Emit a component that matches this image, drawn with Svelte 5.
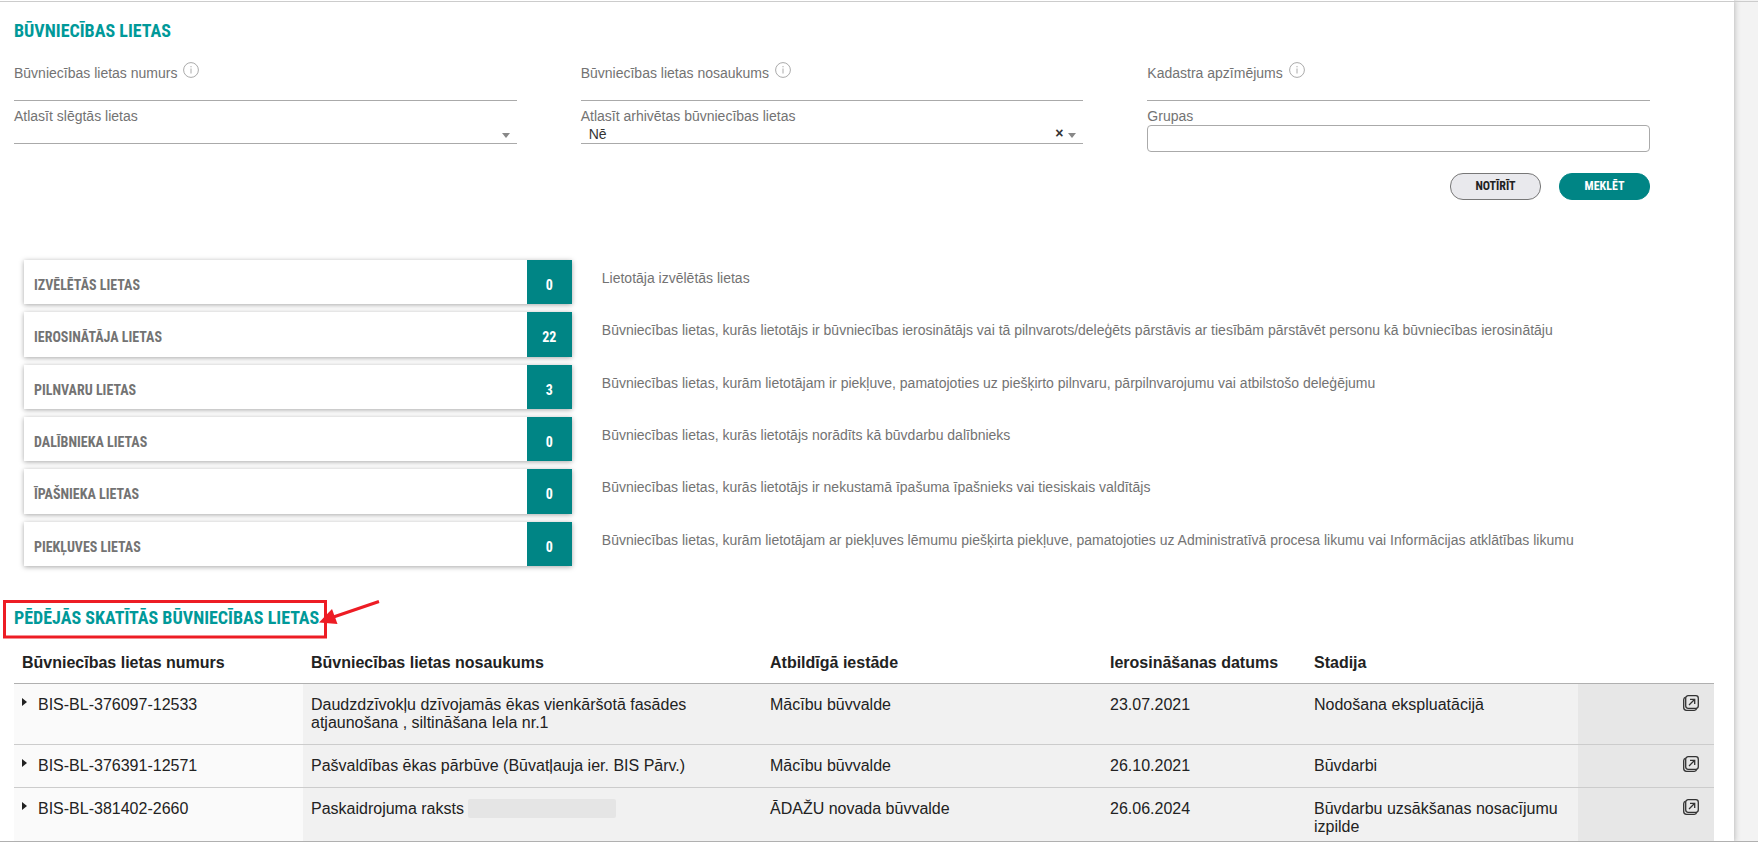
<script lang="ts">
	let number = $state('');
	let name = $state('');
	let cadastre = $state('');
	let closed = $state('');
	let archived = $state('no');
	let groups = $state('');

	const categories = [
		{ label: 'Izvēlētās lietas', count: 0, text: 'Lietotāja izvēlētās lietas' },
		{
			label: 'Ierosinātāja lietas',
			count: 22,
			text: 'Būvniecības lietas, kurās lietotājs ir būvniecības ierosinātājs vai tā pilnvarots/deleģēts pārstāvis ar tiesībām pārstāvēt personu kā būvniecības ierosinātāju'
		},
		{
			label: 'Pilnvaru lietas',
			count: 3,
			text: 'Būvniecības lietas, kurām lietotājam ir piekļuve, pamatojoties uz piešķirto pilnvaru, pārpilnvarojumu vai atbilstošo deleģējumu'
		},
		{
			label: 'Dalībnieka lietas',
			count: 0,
			text: 'Būvniecības lietas, kurās lietotājs norādīts kā būvdarbu dalībnieks'
		},
		{
			label: 'Īpašnieka lietas',
			count: 0,
			text: 'Būvniecības lietas, kurās lietotājs ir nekustamā īpašuma īpašnieks vai tiesiskais valdītājs'
		},
		{
			label: 'Piekļuves lietas',
			count: 0,
			text: 'Būvniecības lietas, kurām lietotājam ar piekļuves lēmumu piešķirta piekļuve, pamatojoties uz Administratīvā procesa likumu vai Informācijas atklātības likumu'
		}
	];

	const cases = [
		{
			number: 'BIS-BL-376097-12533',
			name: 'Daudzdzīvokļu dzīvojamās ēkas vienkāršotā fasādes atjaunošana , siltināšana Iela nr.1',
			authority: 'Mācību būvvalde',
			date: '23.07.2021',
			stage: 'Nodošana ekspluatācijā'
		},
		{
			number: 'BIS-BL-376391-12571',
			name: 'Pašvaldības ēkas pārbūve (Būvatļauja ier. BIS Pārv.)',
			authority: 'Mācību būvvalde',
			date: '26.10.2021',
			stage: 'Būvdarbi'
		},
		{
			number: 'BIS-BL-381402-2660',
			name: 'Paskaidrojuma raksts',
			redacted: true,
			authority: 'ĀDAŽU novada būvvalde',
			date: '26.06.2024',
			stage: 'Būvdarbu uzsākšanas nosacījumu izpilde'
		}
	];

	function clearForm() {
		number = name = cadastre = closed = archived = groups = '';
	}
</script>

{#snippet info()}
	<svg class="info" viewBox="0 0 16 16" aria-hidden="true">
		<circle cx="8" cy="8" r="7.4" />
		<path d="M8 6.5v5M8 4v1.3" />
	</svg>
{/snippet}

{#snippet caret()}
	<svg class="caret" viewBox="0 0 8 5" aria-hidden="true"><path d="M0 0h8L4 5z" /></svg>
{/snippet}

<div class="frame">
	<main class="page">
		<h1>Būvniecības lietas</h1>

		<form class="search" onsubmit={(e) => e.preventDefault()}>
			<div class="field tall">
				<label for="number">Būvniecības lietas numurs{@render info()}</label>
				<input id="number" type="text" bind:value={number} />
			</div>
			<div class="field tall">
				<label for="name">Būvniecības lietas nosaukums{@render info()}</label>
				<input id="name" type="text" bind:value={name} />
			</div>
			<div class="field tall">
				<label for="cadastre">Kadastra apzīmējums{@render info()}</label>
				<input id="cadastre" type="text" bind:value={cadastre} />
			</div>
			<div class="field">
				<label for="closed">Atlasīt slēgtās lietas</label>
				<div class="select">
					<select id="closed" bind:value={closed}>
						<option value=""></option>
						<option value="yes">Jā</option>
						<option value="no">Nē</option>
					</select>
					{@render caret()}
				</div>
			</div>
			<div class="field">
				<label for="archived">Atlasīt arhivētas būvniecības lietas</label>
				<div class="select">
					<select id="archived" bind:value={archived}>
						<option value=""></option>
						<option value="yes">Jā</option>
						<option value="no">Nē</option>
					</select>
					{#if archived}
						<button class="clear" type="button" onclick={() => (archived = '')}>×</button>
					{/if}
					{@render caret()}
				</div>
			</div>
			<div class="field">
				<label for="groups">Grupas</label>
				<input id="groups" class="boxed" type="text" bind:value={groups} />
			</div>
			<div class="actions">
				<button class="pill" type="button" onclick={clearForm}>Notīrīt</button>
				<button class="pill primary" type="submit">Meklēt</button>
			</div>
		</form>

		<ul class="categories">
			{#each categories as category}
				<li>
					<a class="card" href="#list">
						<span class="name">{category.label}</span>
						<span class="count">{category.count}</span>
					</a>
					<p>{category.text}</p>
				</li>
			{/each}
		</ul>

		<div class="recent-title">
			<h2>Pēdējās skatītās būvniecības lietas</h2>
			<svg class="callout" viewBox="0 0 380 40" aria-hidden="true">
				<rect x="2.5" y="2.5" width="321" height="35.5" />
				<path class="shaft" d="M377 2.5L330 18.5" />
				<path class="head" d="M317 23.5L330 10L335.5 25z" />
			</svg>
		</div>

		<table>
			<thead>
				<tr>
					<th class="c-number">Būvniecības lietas numurs</th>
					<th class="c-name">Būvniecības lietas nosaukums</th>
					<th class="c-authority">Atbildīgā iestāde</th>
					<th class="c-date">Ierosināšanas datums</th>
					<th class="c-stage">Stadija</th>
					<th></th>
				</tr>
			</thead>
			<tbody>
				{#each cases as item}
					<tr>
						<td class="number">
							<div class="expander">
								<svg viewBox="0 0 5 8" aria-hidden="true"><path d="M0 0L5 4L0 8z" /></svg>
								{item.number}
							</div>
						</td>
						<td>
							{item.name}
							{#if item.redacted}<span class="redacted"></span>{/if}
						</td>
						<td>{item.authority}</td>
						<td>{item.date}</td>
						<td>{item.stage}</td>
						<td class="open">
							<a href="#case" aria-label={item.number}>
								<svg viewBox="0 0 16 16" aria-hidden="true">
									<path
										d="M2.6 2.2C1.3 2.6.7 3.3.7 4.7V12.5Q.7 15.3 3.5 15.3H11.3C12.7 15.3 13.4 14.7 13.8 13.4"
									/>
									<rect x="2.7" y=".7" width="12.6" height="12.6" rx="2.5" />
									<path d="M6 10L11.5 4.5M7 4.3h4.7V9" />
								</svg>
							</a>
						</td>
					</tr>
				{/each}
			</tbody>
		</table>
	</main>
</div>

<style>
	:global(body) {
		background: #f3f3f3;
		color: #222;
		font: 16px/18px 'Liberation Sans', Arial, sans-serif;
	}

	.frame {
		box-sizing: border-box;
		height: 100vh;
		margin-right: 24px;
		display: flex;
		box-shadow: 0 0 6px #aaa;
		background: #fff;
	}

	/* hairlines above and below run the full window width */
	.frame::before,
	.frame::after {
		content: '';
		position: absolute;
		left: 0;
		right: 0;
		height: 1px;
		background: #ccc;
	}

	.frame::before {
		top: 1px;
	}

	.frame::after {
		bottom: 0;
		background: #b0b0b0;
	}

	.page {
		flex: 1;
		min-width: 0;
		padding: 18px 20px 0 14px;
		overflow: hidden;
	}

	h1,
	h2 {
		margin: 0;
		font: bold 18px/26px 'Roboto Condensed', Arial, sans-serif;
		color: #099;
		text-transform: uppercase;
	}

	.search {
		display: grid;
		grid-template-columns: repeat(3, 1fr);
	}

	.field {
		padding-right: 64px;
		display: flex;
		flex-direction: column;
	}

	.field.tall {
		padding-top: 17px;
		padding-bottom: 6px;
	}

	label {
		display: flex;
		font-size: 14px;
		line-height: 18px;
		color: #737373;
	}

	.tall label {
		line-height: 24px;
		height: 22px;
	}

	.info {
		width: 16px;
		height: 16px;
		margin: 1px 0 0 6px;
		fill: none;
		stroke: #aaa;
	}

	input,
	select {
		box-sizing: border-box;
		width: 100%;
		height: 18px;
		padding: 0 8px;
		border: 0;
		border-bottom: 1px solid #aaa;
		border-radius: 0;
		outline: 0;
		background: none;
		font: 14px/16px 'Liberation Sans', Arial, sans-serif;
		color: #333;
		appearance: none;
	}

	.select {
		position: relative;
	}

	.caret {
		position: absolute;
		right: 7px;
		top: 8px;
		width: 8px;
		height: 5px;
		fill: #888;
		pointer-events: none;
	}

	.clear {
		position: absolute;
		right: 20px;
		top: 0;
		padding: 0;
		border: 0;
		background: none;
		font: bold 14px/16px 'Liberation Sans', Arial, sans-serif;
		color: #333;
	}

	.boxed {
		height: 27px;
		border: 1px solid #aaa;
		border-radius: 4px;
	}

	.actions {
		grid-column: 1 / -1;
		display: flex;
		justify-content: flex-end;
		gap: 18px;
		padding: 21px 64px 0 0;
	}

	.pill {
		width: 91px;
		height: 27px;
		padding: 0 0 2px;
		border: 1px solid #777;
		border-radius: 13px;
		background: #e9e9ed;
		font: bold 12px/14px 'Roboto Condensed', Arial, sans-serif;
		text-transform: uppercase;
		color: #222;
	}

	.pill.primary {
		border-color: #008585;
		background: #008585;
		color: #fff;
	}

	.categories {
		display: grid;
		grid-auto-rows: 1fr;
		gap: 8px;
		min-height: 306px;
		margin: 60px 0 0 10px;
		padding: 0;
		list-style: none;
	}

	.categories li {
		display: grid;
		grid-template-columns: 33fr 67fr;
		gap: 30px;
	}

	.card {
		display: flex;
		box-shadow: 0 1px 5px rgb(0 0 0 / 35%);
		background: #fff;
		font: bold 14px/38px 'Roboto Condensed', Arial, sans-serif;
		text-transform: uppercase;
		text-decoration: none;
		color: #737373;
	}

	.name {
		flex: 1;
		padding: 6px 0 0 10px;
	}

	.count {
		width: 45px;
		padding-top: 6px;
		background: #008585;
		text-align: center;
		color: #fff;
	}

	.categories p {
		margin: 0;
		font-size: 14px;
		line-height: 36px;
		color: #737373;
	}

	.recent-title {
		position: relative;
		padding: 39px 0 23px;
	}

	.callout {
		position: absolute;
		left: -12px;
		top: 33px;
		width: 380px;
		height: 40px;
		fill: none;
		stroke: #ed1c24;
		stroke-width: 3;
	}

	.callout .head {
		fill: #ed1c24;
		stroke: none;
	}

	table {
		width: 100%;
		border-collapse: collapse;
		table-layout: fixed;
	}

	th,
	td {
		box-sizing: border-box;
		padding: 12px 8px;
		text-align: left;
		vertical-align: top;
	}

	th {
		padding: 0 8px 11px;
		border-bottom: 1px solid #b0b0b0;
		white-space: nowrap;
	}

	td {
		border-bottom: 1px solid #ccc;
		background: #f1f1f1;
	}

	.c-number {
		width: 17%;
	}

	.c-name {
		width: 27%;
	}

	.c-authority {
		width: 20%;
	}

	.c-date {
		width: 12%;
	}

	.c-stage {
		width: 16%;
	}

	td.number {
		background: #fafafa;
	}

	.expander {
		display: flex;
		gap: 11px;
	}

	.expander svg {
		width: 5px;
		height: 8px;
		margin-top: 2px;
		fill: #222;
	}

	.redacted {
		display: inline-block;
		width: 148px;
		height: 19px;
		margin: -1px 0;
		border-radius: 2px;
		background: #e5e5e5;
		vertical-align: top;
	}

	td.open {
		padding-top: 11px;
		padding-right: 15px;
		background: #e7e7e7;
	}

	.open a {
		display: flex;
		justify-content: flex-end;
	}

	.open svg {
		width: 16px;
		height: 16px;
		fill: none;
		stroke: #333;
		stroke-width: 1.3;
	}
</style>
